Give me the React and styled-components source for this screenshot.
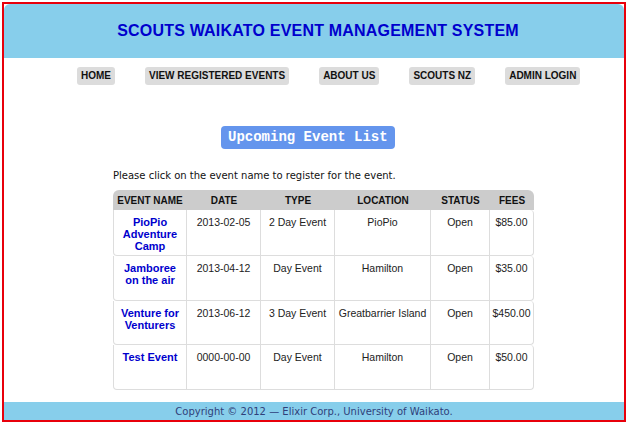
import styled, { createGlobalStyle } from "styled-components";

const GlobalStyle = createGlobalStyle`
  html, body {
    margin: 0;
    padding: 0;
    background: #ffffff;
  }
  body {
    font-family: "Liberation Sans", Arial, sans-serif;
  }
`;

// Red outer frame
const Frame = styled.div`
  box-sizing: border-box;
  width: 624px;
  height: 420px;
  margin: 2px;
  border: 2px solid #e8000b;
  background: #ffffff;
  display: flex;
  flex-direction: column;
`;

const Header = styled.header`
  height: 54px;
  background: #87ceeb;
  border-radius: 6px 6px 0 0;
  display: flex;
  align-items: center;
  justify-content: center;
  padding-left: 8px;
`;

const SiteTitle = styled.h1`
  margin: 0;
  font-family: "Liberation Sans", Arial, sans-serif;
  font-size: 16px;
  font-weight: bold;
  color: #0000cd;
  letter-spacing: 0.2px;
`;

const Nav = styled.nav`
  display: flex;
  gap: 30px;
  padding-left: 73px;
  margin-top: 9px;
`;

const NavButton = styled.a`
  display: block;
  background: #dcdcdc;
  border-radius: 3px;
  padding: 0 4px;
  height: 18px;
  line-height: 18px;
  font-size: 10px;
  font-weight: bold;
  color: #111;
  text-decoration: none;
`;

const Main = styled.main`
  display: flex;
  flex-direction: column;
  align-items: flex-start;
  padding-left: 109px;
`;

const ListHeading = styled.h2`
  align-self: flex-start;
  margin: 41px 0 0 108px;
  padding: 0 7px;
  height: 23px;
  line-height: 23px;
  background: #6495ed;
  border-radius: 4px;
  color: #ffffff;
  font-family: "Liberation Mono", "Courier New", monospace;
  font-size: 14px;
  font-weight: bold;
`;

const Intro = styled.p`
  margin: 20px 0 0;
  font-family: "DejaVu Sans", Verdana, sans-serif;
  font-size: 10px;
  line-height: 14px;
  color: #111;
`;

const Table = styled.table`
  margin-top: 7px;
  table-layout: fixed;
  width: 421px;
  border-collapse: separate;
  border-spacing: 0;
  font-size: 10.5px;
`;

const Th = styled.th`
  height: 20px;
  padding: 0;
  background: #cccccc;
  font-size: 10px;
  font-weight: bold;
  color: #111;
  text-align: center;
  &:first-child {
    border-top-left-radius: 6px;
  }
  &:last-child {
    border-top-right-radius: 6px;
  }
`;

const Td = styled.td`
  height: 34.6px;
  padding: 6px 1px 3px;
  vertical-align: top;
  text-align: center;
  line-height: 12px;
  color: #222;
  border-right: 1px solid #dddddd;
  border-bottom: 1px solid #dddddd;
  &:first-child {
    padding: 6px 5px 3px;
    border-left: 1px solid #dddddd;
    border-radius: 0 0 0 4px;
  }
  &:last-child {
    border-radius: 0 4px 4px 0;
  }
`;

const EventLink = styled.a`
  color: #0000cd;
  font-size: 11px;
  font-weight: bold;
  text-decoration: none;
`;

const Footer = styled.footer`
  margin-top: auto;
  height: 18px;
  background: #87ceeb;
  display: flex;
  align-items: center;
  justify-content: center;
  font-family: "DejaVu Sans", Verdana, sans-serif;
  font-size: 10px;
  color: #2f3f7a;
`;

const navItems = ["HOME", "VIEW REGISTERED EVENTS", "ABOUT US", "SCOUTS NZ", "ADMIN LOGIN"];

const columns = [
  { title: "EVENT NAME", width: 74 },
  { title: "DATE", width: 74 },
  { title: "TYPE", width: 74 },
  { title: "LOCATION", width: 96 },
  { title: "STATUS", width: 59 },
  { title: "FEES", width: 44 },
];

const events = [
  { name: "PioPio Adventure Camp", date: "2013-02-05", type: "2 Day Event", location: "PioPio", status: "Open", fee: "$85.00" },
  { name: "Jamboree on the air", date: "2013-04-12", type: "Day Event", location: "Hamilton", status: "Open", fee: "$35.00" },
  { name: "Venture for Venturers", date: "2013-06-12", type: "3 Day Event", location: "Greatbarrier Island", status: "Open", fee: "$450.00" },
  { name: "Test Event", date: "0000-00-00", type: "Day Event", location: "Hamilton", status: "Open", fee: "$50.00" },
];

export default function App() {
  return (
    <>
      <GlobalStyle />
      <Frame>
        <Header>
          <SiteTitle>SCOUTS WAIKATO EVENT MANAGEMENT SYSTEM</SiteTitle>
        </Header>

        <Nav>
          {navItems.map((item) => (
            <NavButton key={item} href="#">
              {item}
            </NavButton>
          ))}
        </Nav>

        <Main>
          <ListHeading>Upcoming Event List</ListHeading>
          <Intro>Please click on the event name to register for the event.</Intro>

          <Table>
            <colgroup>
              {columns.map((c) => (
                <col key={c.title} style={{ width: c.width }} />
              ))}
            </colgroup>
            <thead>
              <tr>
                {columns.map((c) => (
                  <Th key={c.title}>{c.title}</Th>
                ))}
              </tr>
            </thead>
            <tbody>
              {events.map((ev) => (
                <tr key={ev.name}>
                  <Td>
                    <EventLink href="#">{ev.name}</EventLink>
                  </Td>
                  <Td>{ev.date}</Td>
                  <Td>{ev.type}</Td>
                  <Td>{ev.location}</Td>
                  <Td>{ev.status}</Td>
                  <Td>{ev.fee}</Td>
                </tr>
              ))}
            </tbody>
          </Table>
        </Main>

        <Footer>Copyright © 2012 — Elixir Corp., University of Waikato.</Footer>
      </Frame>
    </>
  );
}
